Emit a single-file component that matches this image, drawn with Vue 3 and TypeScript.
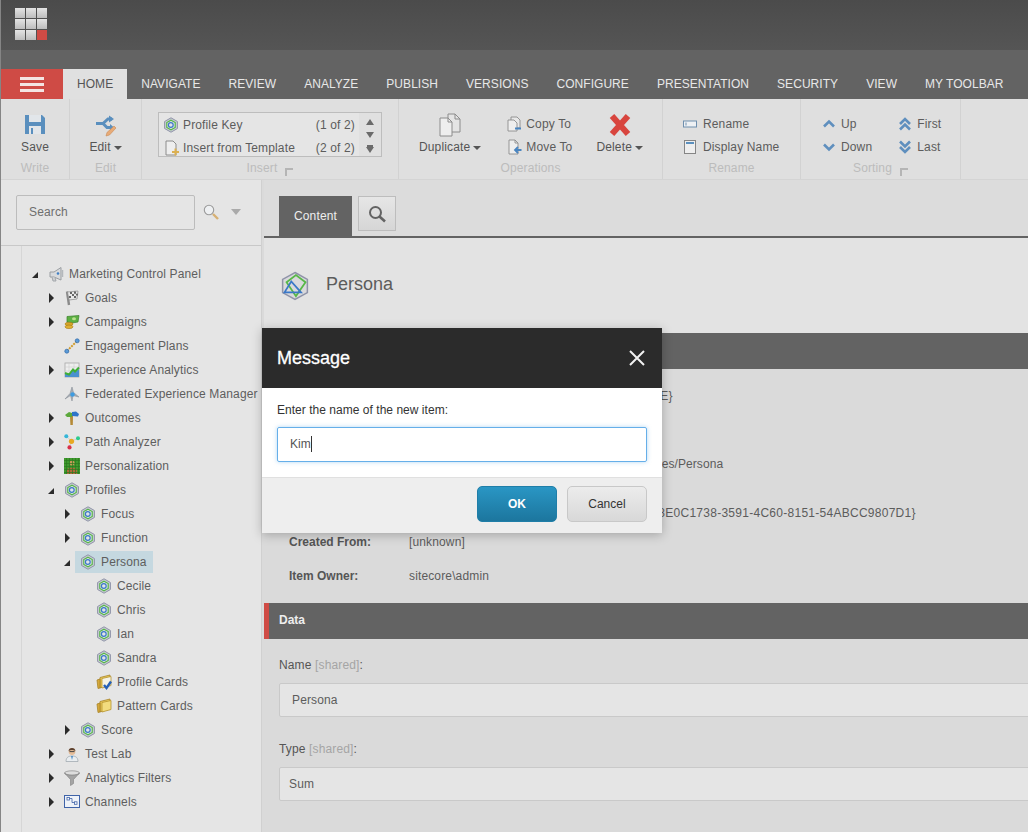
<template>
  <div class="page">
    <svg class="defs" width="0" height="0" aria-hidden="true">
      <symbol id="i-persona" viewBox="0 0 16 16">
        <path d="M8 .8 14.4 4.5V11.5L8 15.2 1.6 11.5V4.5Z" fill="#c9cdd2" stroke="#8f93a8" />
        <path d="M8 3.2 12.2 5.6V10.4L8 12.8 3.8 10.4V5.6Z" fill="#e4e6e8" stroke="#55b54a" stroke-width="1.2" />
        <circle cx="7.8" cy="8" r="2.4" fill="#dfe3e8" stroke="#3a78c8" stroke-width="1.2" />
      </symbol>
      <symbol id="i-persona-lg" viewBox="0 0 16 16">
        <path d="M8 .8 14.6 4.5V11.5L8 15.2 1.4 11.5V4.5Z" fill="#d9d9dc" stroke="#8f93a8" stroke-width=".8" />
        <path d="M3.5 6 8.5 2.2 13.6 6 8.5 13.4Z" fill="none" stroke="#58b848" stroke-width=".95" />
        <path d="M2.4 11.4 6 5.6 11.2 11.4Z" fill="none" stroke="#3a78c8" stroke-width=".95" />
      </symbol>
      <symbol id="i-marketing" viewBox="0 0 16 16">
        <path d="M13 1.5V14L6 11H2V6H6Z" fill="#d8dadc" stroke="#9a9ea2" />
        <path d="M4 11 5 15H8L7 11.5" fill="#cfd1d3" stroke="#a3a7ab" />
        <circle cx="10" cy="7.5" r="1.3" fill="#3f7fc4" />
        <path d="M14.5 4V11" stroke="#b4b8bc" stroke-width="1.5" />
      </symbol>
      <symbol id="i-goals" viewBox="0 0 16 16">
        <path d="M3 1.5 5 15" stroke="#8a8a8a" stroke-width="2.4" />
        <path d="M3.5 2 14 1 13 9 5 10Z" fill="#e8e8e8" stroke="#888" stroke-width=".7" />
        <path d="M6 2H8V4H6ZM10 1.5H12V3.7H10ZM8 4H10V6H8ZM12 3.7H14V5.6H12ZM5 6H7V8H5ZM10 6H12V8H10Z" fill="#666" />
      </symbol>
      <symbol id="i-campaigns" viewBox="0 0 16 16">
        <path d="M3 2.5 15 1.5 14 8 8 9 3 8Z" fill="#5cb043" stroke="#3b7f2c" stroke-width=".7" />
        <ellipse cx="10" cy="4.8" rx="2" ry="1.5" fill="#b9e08f" />
        <ellipse cx="5" cy="10" rx="4" ry="1.8" fill="#d8a62a" stroke="#a57a14" stroke-width=".6" />
        <ellipse cx="5" cy="12.8" rx="4" ry="1.8" fill="#e0b033" stroke="#a57a14" stroke-width=".6" />
      </symbol>
      <symbol id="i-engagement" viewBox="0 0 16 16">
        <path d="M3 13 13 3" stroke="#d09a28" stroke-width="2" stroke-dasharray="2 1" />
        <circle cx="2.8" cy="13.2" r="2" fill="#5b9bd8" stroke="#2f68a8" stroke-width=".7" />
        <circle cx="13.2" cy="2.8" r="2" fill="#5b9bd8" stroke="#2f68a8" stroke-width=".7" />
      </symbol>
      <symbol id="i-analytics" viewBox="0 0 16 16">
        <rect x="1" y="1" width="14" height="14" fill="#eee" stroke="#a9a9a9" stroke-width=".8" />
        <path d="M1 5H15M1 9H15M5 1V15M10 1V15" stroke="#cfcfcf" stroke-width=".6" />
        <path d="M1 15V11L5 13 9 8 11 10 15 7V15Z" fill="#4a90d0" />
        <path d="M1 11 5 12.5 9 7.5 11 9.5 15 5.5" fill="none" stroke="#3fae37" stroke-width="2" />
      </symbol>
      <symbol id="i-federated" viewBox="0 0 16 16">
        <path d="M8 1 9.5 6.5 15 11 9 9.5 8 15 6.5 9.5 1 13 6 7.5Z" fill="#a6adb5" stroke="#8a9098" stroke-width=".6" />
        <circle cx="8.5" cy="8.5" r="2.2" fill="#3e9be0" />
      </symbol>
      <symbol id="i-outcomes" viewBox="0 0 16 16">
        <path d="M6 6H9L8.8 15H6.4Z" fill="#b58a36" />
        <path d="M1 5 5 2 8 3 8 7 3 7Z" fill="#5ca83c" />
        <path d="M8 2 12 1.5 15 4 14 6.5 8 6Z" fill="#2f74c8" />
      </symbol>
      <symbol id="i-path" viewBox="0 0 16 16">
        <path d="M2 2 7.5 7 14 4.5M7.5 7 5.5 13" stroke="#c8c8c8" stroke-width=".8" fill="none" />
        <circle cx="2.3" cy="2.3" r="2" fill="#35b6d8" />
        <circle cx="14" cy="4.3" r="2" fill="#2ecb8c" />
        <circle cx="7.5" cy="7.3" r="2.6" fill="#e8a922" />
        <circle cx="5.5" cy="13.4" r="2.1" fill="#d9304a" />
      </symbol>
      <symbol id="i-personalization" viewBox="0 0 16 16">
        <rect width="16" height="16" fill="#3f9a2e" />
        <circle cx="8" cy="5" r="2.5" fill="#c79a58" />
        <path d="M3 16V12C3 9 13 9 13 12V16Z" fill="#b0693a" />
        <path d="M2.5 0V16M5.5 0V16M8.5 0V16M11.5 0V16M14.5 0V16M0 2.5H16M0 5.5H16M0 8.5H16M0 11.5H16M0 14.5H16" stroke="#2b7a1f" stroke-width=".7" />
      </symbol>
      <symbol id="i-folder" viewBox="0 0 16 16">
        <path d="M4 3.5 14 1V11L4 14Z" fill="#e8c95c" stroke="#a8842a" stroke-width=".8" />
        <path d="M1 6 4 5V14L2 14.5Z" fill="#d6a93a" stroke="#a8842a" stroke-width=".8" />
        <path d="M6 4.5 15 2.5V11.5L6 14Z" fill="#f2dc7e" stroke="#b8942f" stroke-width=".8" />
      </symbol>
      <symbol id="i-cards" viewBox="0 0 16 16">
        <path d="M4 3.5 14 1V11L4 14Z" fill="#e8c95c" stroke="#a8842a" stroke-width=".8" />
        <path d="M1 6 4 5V14L2 14.5Z" fill="#d6a93a" stroke="#a8842a" stroke-width=".8" />
        <path d="M6 4.5 15 2.5V11.5L6 14Z" fill="#f5f3e6" stroke="#b8942f" stroke-width=".8" />
        <path d="M8 11 10.5 14 15 7.5" fill="none" stroke="#2460b8" stroke-width="2.4" />
      </symbol>
      <symbol id="i-lab" viewBox="0 0 16 16">
        <path d="M2 15.5C2 11 5 10 8 10S14 11 14 15.5Z" fill="#e9edf0" stroke="#9aa3aa" stroke-width=".7" />
        <path d="M7 10 8 14 9 10Z" fill="#4c8ec8" />
        <circle cx="8" cy="5.5" r="3.4" fill="#e6bd98" />
        <path d="M4.6 5C4.6 1 11.4 1 11.4 5 9 3.6 7 3.6 4.6 5Z" fill="#5a4030" />
        <path d="M5.5 5.6H10.5" stroke="#444" stroke-width="1" />
      </symbol>
      <symbol id="i-filter" viewBox="0 0 16 16">
        <ellipse cx="8" cy="3" rx="7.5" ry="2.2" fill="#ddd" stroke="#8d8d8d" stroke-width=".7" />
        <path d="M.5 3 6.5 9.5V15.5L9.5 13.5V9.5L15.5 3C13 6 3 6 .5 3Z" fill="#a4a4a4" stroke="#808080" stroke-width=".6" />
      </symbol>
      <symbol id="i-channels" viewBox="0 0 16 16">
        <rect x=".5" y="1.5" width="15" height="12" fill="#eef2f8" stroke="#3f63a8" />
        <path d="M5 4.5H8V8.5H11" fill="none" stroke="#3f63a8" stroke-width=".8" />
        <rect x="3" y="3.5" width="2.5" height="2.5" fill="#fff" stroke="#3f63a8" stroke-width=".8" />
        <rect x="10.5" y="7.8" width="2.5" height="2.5" fill="#fff" stroke="#3f63a8" stroke-width=".8" />
      </symbol>
    </svg>

    <header class="topbar">
      <div class="logo">
        <span v-for="n in 9" :key="n" class="logo-cell" :class="{ red: n === 9 }" />
      </div>
    </header>

    <nav class="tabs">
      <div class="burger"><span /><span /><span /></div>
      <div v-for="t in tabs" :key="t" class="tab" :class="{ active: t === 'HOME' }">{{ t }}</div>
    </nav>

    <section class="ribbon">
      <div class="group g-write">
        <div class="group-body center">
          <button class="large">
            <svg class="large-icon" width="24" height="24" viewBox="0 0 24 24">
              <path d="M2 2H19L22 5V21H2Z" fill="#5a8fbe" />
              <rect x="6" y="2" width="12" height="7" fill="#e2e6ea" />
              <rect x="6" y="13" width="12" height="8" fill="#e2e6ea" />
              <rect x="8" y="15" width="2" height="6" fill="#5a8fbe" />
            </svg>
            <span>Save</span>
          </button>
        </div>
        <div class="group-label">Write</div>
      </div>

      <div class="group g-edit">
        <div class="group-body center">
          <button class="large">
            <svg class="large-icon" width="24" height="24" viewBox="0 0 24 24">
              <path d="M2 10.5H9L13 14.5H18M9 10.5 14 6H18" fill="none" stroke="#5a8fbe" stroke-width="3" />
              <path d="M15 2.5 20 6 15 9.5ZM16 11 20 14.5 16 18Z" fill="#5a8fbe" />
              <path d="M12 23 13 19.5 20 13 22 15 15.5 22Z" fill="#e8ab78" stroke="#c78a55" stroke-width=".6" />
            </svg>
            <span>Edit<i class="caret" /></span>
          </button>
        </div>
        <div class="group-label">Edit</div>
      </div>

      <div class="group g-insert">
        <div class="group-body">
          <div class="insert-box">
            <div class="insert-list">
              <div class="insert-row">
                <svg width="16" height="16"><use href="#i-persona" /></svg>
                <span class="insert-name">Profile Key</span>
                <span>(1 of 2)</span>
              </div>
              <div class="insert-row">
                <svg width="16" height="16" viewBox="0 0 16 16">
                  <path d="M3 1H10L13 4V15H3Z" fill="#eee" stroke="#8c8c8c" />
                  <path d="M9 12H16M12.5 8.5V15.5" stroke="#dcb050" stroke-width="2" />
                </svg>
                <span class="insert-name">Insert from Template</span>
                <span>(2 of 2)</span>
              </div>
            </div>
            <div class="insert-scroll">
              <i class="tri up" />
              <i class="tri down" />
              <i class="tri down last" />
            </div>
          </div>
        </div>
        <div class="group-label">Insert<i class="launcher" /></div>
      </div>

      <div class="group g-ops">
        <div class="group-body ops">
          <button class="large">
            <svg class="large-icon" width="24" height="24" viewBox="0 0 24 24">
              <path d="M10 1H17L22 6V19H10Z" fill="#e4e4e4" stroke="#8c8c8c" />
              <path d="M2 5H10L14 9V23H2Z" fill="#eee" stroke="#8c8c8c" />
              <path d="M10 5V9H14M17 1V6H22" fill="none" stroke="#8c8c8c" />
            </svg>
            <span>Duplicate<i class="caret" /></span>
          </button>
          <div class="small-col">
            <div class="small">
              <svg width="16" height="16" viewBox="0 0 16 16">
                <path d="M5 1H11L14 4V12H5Z" fill="#e8e8e8" stroke="#8c8c8c" stroke-width=".9" />
                <path d="M2 4H8L11 7V15H2Z" fill="#eee" stroke="#8c8c8c" stroke-width=".9" />
                <path d="M9 12.5H15" stroke="#4a85c0" stroke-width="2" />
              </svg>
              <span>Copy To</span>
            </div>
            <div class="small">
              <svg width="16" height="16" viewBox="0 0 16 16">
                <path d="M3 1H9L12 4V15H3Z" fill="#eee" stroke="#8c8c8c" stroke-width=".9" />
                <path d="M9 1V4H12" fill="none" stroke="#8c8c8c" stroke-width=".9" />
                <path d="M15.5 11H10M12 8 9 11 12 14" fill="none" stroke="#4a85c0" stroke-width="1.8" />
              </svg>
              <span>Move To</span>
            </div>
          </div>
          <button class="large del">
            <svg class="large-icon" width="24" height="24" viewBox="0 0 24 24">
              <path d="M4 3 20 21M20 3 4 21" stroke="#d8453e" stroke-width="6" />
            </svg>
            <span>Delete<i class="caret" /></span>
          </button>
        </div>
        <div class="group-label">Operations</div>
      </div>

      <div class="group g-rename">
        <div class="group-body rename">
          <div class="small">
            <svg width="14" height="16" viewBox="0 0 14 16">
              <rect x=".5" y="5" width="13" height="6" fill="#eef1f4" stroke="#6f8fae" />
              <path d="M3 6.5V9.5" stroke="#6f8fae" />
            </svg>
            <span>Rename</span>
          </div>
          <div class="small">
            <svg width="14" height="16" viewBox="0 0 14 16">
              <rect x="1.5" y="1.5" width="11" height="13" fill="#eee" stroke="#858585" />
              <rect x="3" y="3" width="8" height="2" fill="#5a8fbe" />
            </svg>
            <span>Display Name</span>
          </div>
        </div>
        <div class="group-label">Rename</div>
      </div>

      <div class="group g-sort">
        <div class="group-body sort">
          <div class="small-col">
            <div class="small">
              <svg width="14" height="16" viewBox="0 0 14 16"><path d="M2 10.5 7 5.5 12 10.5" class="chev" /></svg>
              <span>Up</span>
            </div>
            <div class="small">
              <svg width="14" height="16" viewBox="0 0 14 16"><path d="M2 5.5 7 10.5 12 5.5" class="chev" /></svg>
              <span>Down</span>
            </div>
          </div>
          <div class="small-col">
            <div class="small">
              <svg width="14" height="16" viewBox="0 0 14 16"><path d="M2 8 7 3 12 8M2 13.5 7 8.5 12 13.5" class="chev" /></svg>
              <span>First</span>
            </div>
            <div class="small">
              <svg width="14" height="16" viewBox="0 0 14 16"><path d="M2 2.5 7 7.5 12 2.5M2 8 7 13 12 8" class="chev" /></svg>
              <span>Last</span>
            </div>
          </div>
        </div>
        <div class="group-label">Sorting<i class="launcher" /></div>
      </div>
    </section>

    <main class="workspace">
      <aside class="sidebar">
        <div class="search">
          <div class="search-input">Search</div>
          <svg class="search-icon" width="16" height="16" viewBox="0 0 16 16">
            <circle cx="6" cy="6" r="4.7" fill="#eef0f2" stroke="#9b9b9b" stroke-width="1.1" />
            <path d="M10 10 15 15" stroke="#d6b074" stroke-width="2.4" />
          </svg>
          <i class="search-drop" />
        </div>
        <div class="tree">
          <div
            v-for="row in tree"
            :key="row.label"
            class="tree-row"
            :style="{ paddingLeft: 9 + row.depth * 16 + 'px' }"
          >
            <i class="arrow" :class="row.arrow" />
            <div class="tree-item" :class="{ selected: row.selected }">
              <svg width="16" height="16"><use :href="'#i-' + row.icon" /></svg>
              <span>{{ row.label }}</span>
            </div>
          </div>
        </div>
      </aside>

      <div class="content">
        <div class="content-tabs">
          <div class="content-tab">Content</div>
          <button class="content-search">
            <svg width="18" height="18" viewBox="0 0 18 18">
              <circle cx="7.5" cy="7.5" r="5.5" fill="none" stroke="#636363" stroke-width="2" />
              <path d="M11.5 11.5 17 16.5" stroke="#636363" stroke-width="2.6" />
            </svg>
          </button>
        </div>

        <div class="item-head">
          <svg width="30" height="30"><use href="#i-persona-lg" /></svg>
          <h1>Persona</h1>
        </div>

        <div class="section-bar" />
        <div class="info">
          <div v-for="r in info" :key="r.id" class="info-row" :class="r.cls">
            <b>{{ r.label }}</b>
            <span>{{ r.value }}</span>
          </div>
        </div>

        <div class="section-bar data">Data</div>
        <div class="field">
          <label>Name <em>[shared]</em>:</label>
          <div class="field-input name">Persona</div>
        </div>
        <div class="field">
          <label>Type <em>[shared]</em>:</label>
          <div class="field-input">Sum</div>
        </div>
      </div>
    </main>

    <div class="dialog">
      <div class="dialog-head">
        <span>Message</span>
        <svg width="18" height="18" viewBox="0 0 18 18">
          <path d="M2 2 16 16M16 2 2 16" stroke="#f2f2f2" stroke-width="2" />
        </svg>
      </div>
      <div class="dialog-body">
        <p>Enter the name of the new item:</p>
        <div class="dialog-input">Kim<i class="text-caret" /></div>
      </div>
      <div class="dialog-foot">
        <button class="btn ok">OK</button>
        <button class="btn cancel">Cancel</button>
      </div>
    </div>
  </div>
</template>

<script setup lang="ts">
interface TreeRow {
  label: string;
  icon: string;
  depth: number;
  arrow: 'open' | 'closed' | 'none';
  selected?: boolean;
}

const tabs: string[] = [
  'HOME', 'NAVIGATE', 'REVIEW', 'ANALYZE', 'PUBLISH', 'VERSIONS',
  'CONFIGURE', 'PRESENTATION', 'SECURITY', 'VIEW', 'MY TOOLBAR',
];

const tree: TreeRow[] = [
  { label: 'Marketing Control Panel', icon: 'marketing', depth: 0, arrow: 'open' },
  { label: 'Goals', icon: 'goals', depth: 1, arrow: 'closed' },
  { label: 'Campaigns', icon: 'campaigns', depth: 1, arrow: 'closed' },
  { label: 'Engagement Plans', icon: 'engagement', depth: 1, arrow: 'none' },
  { label: 'Experience Analytics', icon: 'analytics', depth: 1, arrow: 'closed' },
  { label: 'Federated Experience Manager', icon: 'federated', depth: 1, arrow: 'none' },
  { label: 'Outcomes', icon: 'outcomes', depth: 1, arrow: 'closed' },
  { label: 'Path Analyzer', icon: 'path', depth: 1, arrow: 'closed' },
  { label: 'Personalization', icon: 'personalization', depth: 1, arrow: 'closed' },
  { label: 'Profiles', icon: 'persona', depth: 1, arrow: 'open' },
  { label: 'Focus', icon: 'persona', depth: 2, arrow: 'closed' },
  { label: 'Function', icon: 'persona', depth: 2, arrow: 'closed' },
  { label: 'Persona', icon: 'persona', depth: 2, arrow: 'open', selected: true },
  { label: 'Cecile', icon: 'persona', depth: 3, arrow: 'none' },
  { label: 'Chris', icon: 'persona', depth: 3, arrow: 'none' },
  { label: 'Ian', icon: 'persona', depth: 3, arrow: 'none' },
  { label: 'Sandra', icon: 'persona', depth: 3, arrow: 'none' },
  { label: 'Profile Cards', icon: 'cards', depth: 3, arrow: 'none' },
  { label: 'Pattern Cards', icon: 'folder', depth: 3, arrow: 'none' },
  { label: 'Score', icon: 'persona', depth: 2, arrow: 'closed' },
  { label: 'Test Lab', icon: 'lab', depth: 1, arrow: 'closed' },
  { label: 'Analytics Filters', icon: 'filter', depth: 1, arrow: 'closed' },
  { label: 'Channels', icon: 'channels', depth: 1, arrow: 'closed' },
];

// rows 1-4 sit behind the dialog, only their right ends show
const info = [
  { id: 'id', label: '', value: '{AB86861A-6C30-4AC5-B394-E8F99E8B87DE}', cls: 'wide' },
  { id: 'name', label: '', value: '', cls: '' },
  { id: 'path', label: '', value: '/sitecore/system/Marketing Control Panel/Profiles/Persona', cls: 'tight' },
  { id: 'template', label: '', value: '{8E0C1738-3591-4C60-8151-54ABCC9807D1}', cls: 'tall guid' },
  { id: 'from', label: 'Created From:', value: '[unknown]', cls: '' },
  { id: 'owner', label: 'Item Owner:', value: 'sitecore\\admin', cls: '' },
];
</script>

<style scoped>
.page {
  position: relative;
  width: 1028px;
  height: 832px;
  overflow: hidden;
  box-sizing: border-box;
  border-left: 1px solid #858585;
  background: #dadada;
  font-family: "Liberation Sans", Arial, sans-serif;
  font-size: 12px;
  letter-spacing: 0.14px;
  color: #5c5c5c;
  display: flex;
  flex-direction: column;
}

.defs {
  position: absolute;
}

button {
  font: inherit;
  letter-spacing: inherit;
  color: inherit;
  background: none;
  border: 0;
  padding: 0;
}

.topbar {
  height: 50px;
  flex: none;
  padding: 8px 0 0 14px;
  box-sizing: border-box;
  background: linear-gradient(#4b4b4b, #555);
}

.logo {
  display: grid;
  grid-template-columns: repeat(3, 10px);
  grid-auto-rows: 10px;
  gap: 1px;
}

.logo-cell {
  background: linear-gradient(#e4e4e4, #bdbdbd);
}

.logo-cell.red {
  background: #cf4b45;
}

.tabs {
  height: 49px;
  flex: none;
  display: flex;
  align-items: flex-end;
  background: #636363;
  letter-spacing: 0.05px;
}

.burger {
  width: 62px;
  height: 30px;
  background: #cf4b45;
  display: flex;
  flex-direction: column;
  align-items: center;
  justify-content: center;
  gap: 3px;
}

.burger span {
  width: 24px;
  height: 3px;
  background: #f4e4e2;
}

.tab {
  height: 30px;
  line-height: 30px;
  padding: 0 14px;
  color: #e8e8e8;
  white-space: nowrap;
}

.tab.active {
  background: #e0e0e0;
  color: #555;
}

.ribbon {
  height: 81px;
  flex: none;
  box-sizing: border-box;
  display: flex;
  background: #dfdfdf;
  border-bottom: 1px solid #d4d4d4;
}

.group {
  flex: none;
  box-sizing: border-box;
  border-right: 1px solid #d2d2d2;
  display: flex;
  flex-direction: column;
}

.g-write { width: 69px; }
.g-edit { width: 72px; }
.g-insert { width: 257px; }
.g-ops { width: 264px; }
.g-rename { width: 138px; }
.g-sort { width: 160px; }

.group-body {
  height: 59px;
  box-sizing: border-box;
  padding-top: 14px;
  display: flex;
}

.center {
  justify-content: center;
}

.group-label {
  height: 21px;
  line-height: 21px;
  text-align: center;
  color: #bcbcbc;
}

.large {
  display: flex;
  flex-direction: column;
  align-items: center;
  color: #555;
  white-space: nowrap;
}

.large-icon {
  display: block;
  height: 24px;
  margin-bottom: 1px;
}

.large span {
  line-height: 18px;
}

.caret {
  display: inline-block;
  margin-left: 3px;
  vertical-align: 1px;
  border: 4px solid transparent;
  border-top-color: #555;
  border-bottom: 0;
}

.launcher {
  display: inline-block;
  width: 8px;
  height: 8px;
  margin-left: 8px;
  vertical-align: -4px;
  border-top: 2px solid #b5b5b5;
  border-left: 2px solid #b5b5b5;
  box-sizing: border-box;
}

.g-insert .group-body {
  padding: 13px 0 0 16px;
}

.insert-box {
  width: 224px;
  height: 45px;
  box-sizing: border-box;
  display: flex;
  border: 1px solid #bdbdbd;
  background: #e5e5e5;
  overflow: hidden;
}

.insert-list {
  flex: 1;
  padding: 0 4px;
  min-width: 0;
}

.insert-row {
  height: 23px;
  display: flex;
  align-items: center;
  gap: 4px;
  color: #5c5c5c;
}

.insert-name {
  flex: 1;
}

.insert-scroll {
  width: 22px;
  background: #e0e0e0;
  display: flex;
  flex-direction: column;
  align-items: center;
  padding-top: 6px;
  gap: 7px;
  box-sizing: border-box;
}

.tri {
  display: block;
  border-left: 4px solid transparent;
  border-right: 4px solid transparent;
}

.tri.up {
  border-bottom: 6px solid #6b6b6b;
}

.tri.down {
  border-top: 6px solid #6b6b6b;
}

.tri.last {
  box-shadow: 0 -3px 0 -1px #6b6b6b;
  margin-top: 2px;
}

.ops {
  padding-left: 20px;
  gap: 25px;
}

.del {
  margin-left: -1px;
}

.small-col {
  display: flex;
  flex-direction: column;
}

.small {
  height: 22.5px;
  display: flex;
  align-items: center;
  gap: 4px;
  color: #5c5c5c;
  white-space: nowrap;
}

.rename {
  flex-direction: column;
  padding-left: 20px;
}

.rename .small {
  gap: 6px;
}

.sort {
  padding-left: 21px;
  gap: 26px;
}

.sort .small {
  gap: 5px;
}

.chev {
  fill: none;
  stroke: #5f8fbe;
  stroke-width: 2.6;
}

.workspace {
  flex: 1;
  display: flex;
  min-height: 0;
}

.sidebar {
  width: 261px;
  flex: none;
  box-sizing: border-box;
  background: #e5e5e5;
  border-right: 1px solid #d0d0d0;
  display: flex;
  flex-direction: column;
}

.search {
  height: 66px;
  flex: none;
  box-sizing: border-box;
  padding: 15px 0 0 15px;
  border-bottom: 1px solid #c8c8c8;
  display: flex;
  align-items: flex-start;
}

.search-input {
  width: 179px;
  height: 35px;
  box-sizing: border-box;
  line-height: 33px;
  padding-left: 12px;
  border: 1px solid #bcbcbc;
  border-radius: 2px;
  color: #6e6e6e;
}

.search-icon {
  margin: 9px 0 0 8px;
}

.search-drop {
  margin: 14px 0 0 12px;
  border: 5px solid transparent;
  border-top: 6px solid #aaa;
  border-bottom: 0;
}

.tree {
  flex: 1;
  margin-left: 20px;
  padding-top: 16px;
  border-left: 1px solid #d6d6d6;
}

.tree-row {
  height: 24px;
  display: flex;
  align-items: center;
  white-space: nowrap;
}

.arrow {
  width: 12px;
  height: 10px;
  flex: none;
  position: relative;
}

.arrow.closed::before {
  content: "";
  position: absolute;
  left: 2px;
  top: 0;
  border-left: 5px solid #2b2b2b;
  border-top: 5px solid transparent;
  border-bottom: 5px solid transparent;
}

.arrow.open::before {
  content: "";
  position: absolute;
  left: 1px;
  top: 3px;
  border-left: 6px solid transparent;
  border-bottom: 6px solid #2b2b2b;
}

.tree-item {
  height: 22px;
  display: flex;
  align-items: center;
  gap: 5px;
  padding: 0 6px 0 5px;
  color: #5e5e5e;
}

.tree-item.selected {
  background: #c5d8e0;
}

.content {
  flex: 1;
  min-width: 0;
  margin-left: 2px;
  background: #dadada;
  overflow: hidden;
}

.content-tabs {
  height: 58px;
  box-sizing: border-box;
  padding: 16px 0 0 15px;
  display: flex;
  gap: 6px;
  align-items: flex-start;
  background: #dcdcdc;
  border-bottom: 2px solid #636363;
}

.content-tab {
  width: 73px;
  height: 40px;
  line-height: 40px;
  text-align: center;
  background: #636363;
  color: #eee;
}

.content-search {
  width: 38px;
  height: 35px;
  border: 1px solid #bdbdbd;
  box-sizing: border-box;
  background: linear-gradient(#e6e6e6, #d6d6d6);
  display: flex;
  align-items: center;
  justify-content: center;
}

.item-head {
  height: 95px;
  box-sizing: border-box;
  padding: 0 0 2px 16px;
  display: flex;
  align-items: center;
  gap: 16px;
  background: #e3e3e3;
}

.item-head svg {
  margin-top: 2px;
}

.item-head h1 {
  margin: 0;
  font-size: 18px;
  font-weight: normal;
  letter-spacing: 0;
  color: #5c5c5c;
}

.section-bar {
  height: 36px;
  line-height: 35px;
  padding-left: 15px;
  background: #636363;
  color: #eee;
  font-weight: bold;
  letter-spacing: 0;
}

.section-bar.data {
  border-left: 5px solid #cf4b45;
  padding-left: 10px;
}

.info {
  height: 234px;
  box-sizing: border-box;
  padding: 10px 0 0 25px;
}

.info-row {
  height: 34px;
  display: flex;
  align-items: center;
  white-space: nowrap;
}

.info-row.tall {
  height: 44px;
  padding-top: 20px;
  box-sizing: border-box;
}

.info-row.tight {
  letter-spacing: 0.07px;
}

.info-row.wide {
  letter-spacing: 0.2px;
}

.info-row.guid span {
  margin-left: 245px;
  letter-spacing: 0.27px;
}

.info-row b {
  width: 120px;
  flex: none;
  color: #555;
  letter-spacing: 0;
}

.field {
  padding: 18px 0 0 15px;
}

.field label {
  display: block;
  line-height: 16px;
  margin-bottom: 10px;
  color: #555;
}

.field em {
  font-style: normal;
  color: #a5a5a5;
}

.field + .field {
  padding-top: 24px;
}

.field-input {
  width: 900px;
  height: 34px;
  box-sizing: border-box;
  line-height: 32px;
  padding-left: 9px;
  background: #e5e5e5;
  border: 1px solid #c9c9c9;
  border-radius: 2px;
  color: #5c5c5c;
}

.field-input.name {
  padding-left: 12px;
}

.dialog {
  position: absolute;
  left: 261px;
  top: 328px;
  width: 400px;
  height: 205px;
  display: flex;
  flex-direction: column;
  box-shadow: 0 2px 10px rgba(0, 0, 0, 0.25);
  letter-spacing: 0.03px;
}

.dialog-head {
  height: 60px;
  flex: none;
  box-sizing: border-box;
  padding: 0 16px 0 15px;
  display: flex;
  align-items: center;
  justify-content: space-between;
  background: #2b2b2b;
  color: #fff;
  font-size: 18px;
  -webkit-text-stroke: 0.3px #fff;
  letter-spacing: 0;
}

.dialog-body {
  height: 89px;
  flex: none;
  box-sizing: border-box;
  padding: 14px 15px 0;
  background: #fff;
}

.dialog-body p {
  margin: 0 0 9px;
  line-height: 16px;
  color: #333;
}

.dialog-input {
  height: 35px;
  box-sizing: border-box;
  line-height: 33px;
  padding-left: 12px;
  border: 1px solid #66afe9;
  border-radius: 2px;
  box-shadow: 0 0 4px rgba(102, 175, 233, 0.5);
  color: #555;
}

.text-caret {
  display: inline-block;
  width: 1px;
  height: 16px;
  vertical-align: -4px;
  background: #333;
}

.dialog-foot {
  flex: 1;
  box-sizing: border-box;
  padding: 0 15px 3px 0;
  display: flex;
  align-items: center;
  justify-content: flex-end;
  gap: 10px;
  background: #eee;
  border-top: 1px solid #e0e0e0;
}

.btn {
  width: 80px;
  height: 36px;
  box-sizing: border-box;
  border-radius: 5px;
  text-align: center;
}

.btn.ok {
  background: linear-gradient(#2a96c4, #1c769e);
  border: 1px solid #1f7ea8;
  color: #fff;
  font-weight: bold;
}

.btn.cancel {
  background: linear-gradient(#ececec, #d8d8d8);
  border: 1px solid #c8c8c8;
  color: #333;
}
</style>

<style>
html,
body {
  margin: 0;
  overflow: hidden;
}
</style>
